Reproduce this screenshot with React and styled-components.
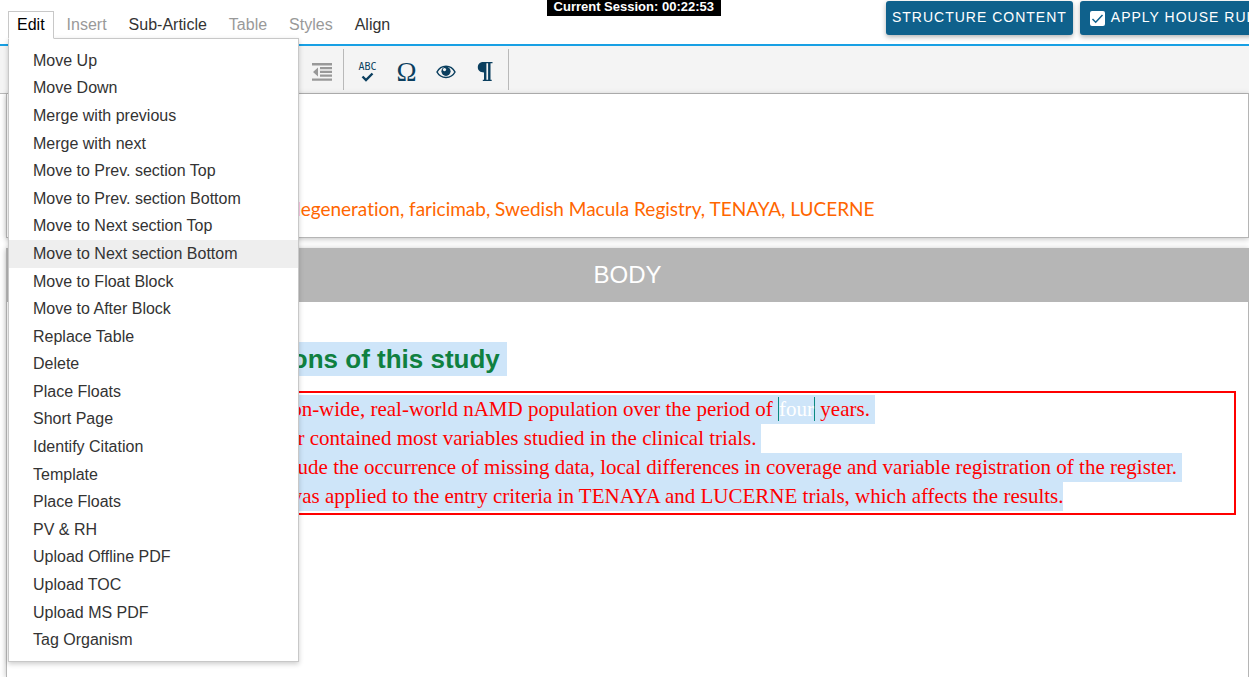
import React from 'react';
import styled, { createGlobalStyle } from 'styled-components';

const GlobalStyle = createGlobalStyle`
  * {
    box-sizing: border-box;
  }
  body {
    margin: 0;
    overflow: hidden;
    background: #fff;
    font-family: 'Liberation Sans', Arial, sans-serif;
    color: #333;
  }
  button {
    font-family: inherit;
  }
`;

const Page = styled.div`
  display: flex;
  flex-direction: column;
  min-height: 100vh;
`;

const Header = styled.header`
  display: grid;
  grid-template-columns: minmax(0, 51fr) auto minmax(0, 50fr);
  align-items: start;
  height: 46px;
  padding-left: 8px;
  border-bottom: 2px solid #18a0e4;
`;

const MenuBar = styled.nav`
  display: flex;
  gap: 4px;
  padding-top: 11px;
`;

const MenuEntry = styled.div`
  position: relative;
`;

const MenuTab = styled.button`
  position: relative;
  z-index: ${({ $open }) => ($open ? 3 : 0)};
  display: block;
  height: 28px;
  padding: 0 8px;
  border: 1px solid ${({ $open }) => ($open ? '#c8c8c8' : 'transparent')};
  border-bottom-color: ${({ $open }) => ($open ? '#fff' : 'transparent')};
  background: ${({ $open }) => ($open ? '#fff' : 'transparent')};
  color: ${({ $open, disabled }) =>
    disabled ? '#999' : $open ? '#000' : '#333'};
  font-size: 16px;
  line-height: 26px;
  white-space: nowrap;
`;

const Dropdown = styled.ul`
  position: absolute;
  z-index: 2;
  top: 27px;
  left: 0;
  display: grid;
  grid-auto-rows: 1fr;
  width: 291px;
  height: 624px;
  margin: 0;
  padding: 8px 0 7px;
  border: 1px solid #c8c8c8;
  background: #fff;
  box-shadow: 0 2px 5px rgba(0, 0, 0, 0.2);
  list-style: none;
`;

const DropdownItem = styled.button`
  display: block;
  width: 100%;
  height: 100%;
  padding: 0 24px;
  border: 0;
  background: ${({ $active }) => ($active ? '#eee' : 'transparent')};
  color: #333;
  font-size: 16px;
  line-height: 26px;
  text-align: left;
`;

const Session = styled.div`
  height: 16px;
  padding: 0 7px;
  background: #000;
  color: #fff;
  font-size: 13px;
  font-weight: bold;
  line-height: 13px;
  white-space: nowrap;
`;

const Actions = styled.div`
  display: flex;
  gap: 7px;
  padding: 1px 0 0 165px;
`;

const actionStyle = `
  display: flex;
  flex: none;
  align-items: center;
  height: 34px;
  border: 0;
  border-radius: 3px;
  background: #0f618c;
  color: #fff;
  font-size: 14px;
  letter-spacing: 1px;
  text-transform: uppercase;
  white-space: nowrap;
  box-shadow: 0 2px 5px rgba(0, 0, 0, 0.3);
`;

const ActionButton = styled.button`
  ${actionStyle}
  padding: 0 6px 2px;
`;

const ActionToggle = styled.label`
  ${actionStyle}
  gap: 6px;
  padding: 0 10px 2px;
`;

const Checkbox = styled.input`
  appearance: none;
  width: 15px;
  height: 15px;
  margin: 2px 0 0;
  border-radius: 2px;
  background: #fff
    url("data:image/svg+xml,%3Csvg xmlns='http://www.w3.org/2000/svg' viewBox='0 0 15 15'%3E%3Cpath d='M2.5 8l3.200 3.200L12.500 4' fill='none' stroke='%230f618c' stroke-width='1.500'/%3E%3C/svg%3E");
`;

const Toolbar = styled.div`
  display: flex;
  align-items: center;
  height: 48px;
  padding-left: 300px;
  border-bottom: 1px solid #b9b9b9;
  background: #f4f4f4;
`;

const ToolGroup = styled.div`
  display: flex;
  align-items: center;
  height: 41px;
  padding: 0 4px;
  border-right: 1px solid #b9b9b9;
`;

const ToolButton = styled.button`
  display: flex;
  align-items: center;
  justify-content: center;
  width: ${({ $narrow }) => ($narrow ? 35 : 39)}px;
  height: 36px;
  padding: 4px 0 0;
  border: 0;
  background: transparent;
  color: #0b3f5f;
`;

const Symbol = styled.span`
  font-size: 27px;
  line-height: 28px;
  font-family: 'Liberation Serif', 'Times New Roman', serif;
`;

const SpellCheck = styled.span`
  display: flex;
  flex-direction: column;
  align-items: center;
  font-family: 'DejaVu Sans Mono', monospace;
  font-size: 10px;
  line-height: 11px;
`;

const Document = styled.main`
  display: flex;
  flex: 1;
  flex-direction: column;
  gap: 10px;
  padding-left: 6px;
`;

const Panel = styled.section`
  flex: ${({ $grow }) => ($grow ? 1 : 'none')};
  border: solid #b5b5b5;
  border-width: ${({ $grow }) => ($grow ? '0 1px' : '0 1px 1px')};
  background: #fff;
  box-shadow: 0 1px 6px rgba(0, 0, 0, 0.25);
`;

const Keywords = styled.p`
  margin: 0;
  padding: 101px 22px 14px;
  color: #ff6600;
  font-family: Lato, sans-serif;
  font-size: 19px;
  font-variant-ligatures: none;
  line-height: 28px;
`;

const PanelTitle = styled.h1`
  margin: 0;
  background: #b6b6b6;
  color: #fff;
  font-size: 24px;
  font-weight: normal;
  line-height: 54px;
  text-align: center;
`;

const PanelContent = styled.div`
  padding: 40px 12px 0;
`;

const Heading = styled.h2`
  width: fit-content;
  margin: 0 0 15px;
  padding: 0 7px;
  background: #cee5f9;
  color: #0f8040;
  font-size: 26px;
  line-height: 34px;
`;

const StatementList = styled.ul`
  margin: 0;
  padding: 2px 0 2px 38px;
  border: 2px solid #f00;
  color: #f00;
  font-family: Georgia, 'Liberation Serif', serif;
  font-size: 21px;
  line-height: 29px;
  list-style: none;
`;

const Statement = styled.li`
  width: fit-content;
  padding-right: ${({ $last }) => ($last ? 0 : 5)}px;
  background: #cee5f9;
  white-space: nowrap;
`;

const Tracked = styled.span`
  border: solid #0a8a80;
  border-width: 0 1px;
  color: #fff;
`;

const menus = [
  { label: 'Edit', open: true },
  { label: 'Insert', disabled: true },
  { label: 'Sub-Article' },
  { label: 'Table', disabled: true },
  { label: 'Styles', disabled: true },
  { label: 'Align' }
];

const editItems = [
  'Move Up',
  'Move Down',
  'Merge with previous',
  'Merge with next',
  'Move to Prev. section Top',
  'Move to Prev. section Bottom',
  'Move to Next section Top',
  'Move to Next section Bottom',
  'Move to Float Block',
  'Move to After Block',
  'Replace Table',
  'Delete',
  'Place Floats',
  'Short Page',
  'Identify Citation',
  'Template',
  'Place Floats',
  'PV & RH',
  'Upload Offline PDF',
  'Upload TOC',
  'Upload MS PDF',
  'Tag Organism'
];

const OutdentIcon = () => (
  <svg width="20" height="18" viewBox="0 0 20 18" fill="#999">
    <path d="M0 0h20v2.400H0zM8 4h12v2.200H8zM8 7.800h12v2.200H8zM8 11.600h12v2.200H8zM0 15.400h20v2.400H0zM6 4.500v9L1 9z" />
  </svg>
);

const CheckIcon = () => (
  <svg width="13" height="10" viewBox="0 0 13 10">
    <path
      d="M1.500 4.500l3.500 3.500L11.500 1.500"
      fill="none"
      stroke="currentColor"
      strokeWidth="2.400"
    />
  </svg>
);

const EyeIcon = () => (
  <svg width="20" height="14" viewBox="0 0 20 14">
    <path
      d="M1 7C3 3.200 6.200 1.300 10 1.300S17 3.200 19 7c-2 3.800-5.200 5.400-9 5.400S3 10.800 1 7z"
      fill="none"
      stroke="currentColor"
      strokeWidth="1.500"
    />
    <circle cx="10" cy="6.300" r="4.600" fill="currentColor" />
    <circle cx="8.500" cy="4.600" r="1.600" fill="#f4f4f4" />
  </svg>
);

const PilcrowIcon = () => (
  <svg width="16" height="20" viewBox="0 0 16 20" fill="currentColor">
    <path d="M6 0h9.500v1.200h-2v16.600h1.200V19H9.800v-1.200h1.300V1.200H9.400v16.600h1.200V19H5.800v-1.200H7v-7.300C3.200 10.500.8 8.500.8 5.300S3 0 6 0z" />
  </svg>
);

const App = () => (
  <>
    <GlobalStyle />
    <Page>
      <Header>
        <MenuBar>
          {menus.map(({ label, open, disabled }) => (
            <MenuEntry key={label}>
              <MenuTab type="button" $open={open} disabled={disabled}>
                {label}
              </MenuTab>
              {open && (
                <Dropdown>
                  {editItems.map((item, index) => (
                    <li key={index}>
                      <DropdownItem type="button" $active={index === 7}>
                        {item}
                      </DropdownItem>
                    </li>
                  ))}
                </Dropdown>
              )}
            </MenuEntry>
          ))}
        </MenuBar>
        <Session>Current Session: 00:22:53</Session>
        <Actions>
          <ActionButton type="button">Structure Content</ActionButton>
          <ActionToggle>
            <Checkbox type="checkbox" defaultChecked />
            Apply House Rules
          </ActionToggle>
        </Actions>
      </Header>

      <Toolbar>
        <ToolGroup>
          <ToolButton type="button" $narrow aria-label="Outdent">
            <OutdentIcon />
          </ToolButton>
        </ToolGroup>
        <ToolGroup>
          <ToolButton type="button">
            <SpellCheck>
              ABC
              <CheckIcon />
            </SpellCheck>
          </ToolButton>
          <ToolButton type="button">
            <Symbol>Ω</Symbol>
          </ToolButton>
          <ToolButton type="button" aria-label="Preview">
            <EyeIcon />
          </ToolButton>
          <ToolButton type="button" aria-label="Show formatting">
            <PilcrowIcon />
          </ToolButton>
        </ToolGroup>
      </Toolbar>

      <Document>
        <Panel>
          <Keywords>
            Keywords: age-related macular degeneration, faricimab, Swedish
            Macula Registry, TENAYA, LUCERNE
          </Keywords>
        </Panel>
        <Panel $grow>
          <PanelTitle>BODY</PanelTitle>
          <PanelContent>
            <Heading>Strengths and limitations of this study</Heading>
            <StatementList>
              <Statement>
                This study comprised a nation-wide, real-world nAMD population
                over the period of <Tracked>four</Tracked> years.
              </Statement>
              <Statement>
                This national clinical register contained most variables
                studied in the clinical trials.
              </Statement>
              <Statement>
                The possible limitations include the occurrence of missing
                data, local differences in coverage and variable registration
                of the register.
              </Statement>
              <Statement $last>
                A modified approximation was applied to the entry criteria in
                TENAYA and LUCERNE trials, which affects the results.
              </Statement>
            </StatementList>
          </PanelContent>
        </Panel>
      </Document>
    </Page>
  </>
);

export default App;
